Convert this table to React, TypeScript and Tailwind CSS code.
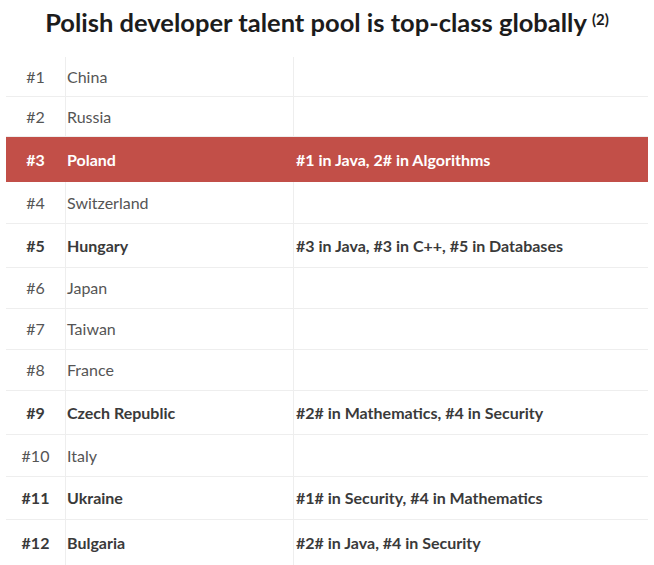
const rows = [
  { rank: "#1", country: "China", note: "", h: "h-[40px]" },
  { rank: "#2", country: "Russia", note: "", h: "h-[40px]" },
  { rank: "#3", country: "Poland", note: "#1 in Java, 2# in Algorithms", h: "h-[45px]", highlight: true },
  { rank: "#4", country: "Switzerland", note: "", h: "h-[42px]" },
  { rank: "#5", country: "Hungary", note: "#3 in Java, #3 in C++, #5 in Databases", h: "h-[44px]" },
  { rank: "#6", country: "Japan", note: "", h: "h-[41px]" },
  { rank: "#7", country: "Taiwan", note: "", h: "h-[41px]" },
  { rank: "#8", country: "France", note: "", h: "h-[41px]" },
  { rank: "#9", country: "Czech Republic", note: "#2# in Mathematics, #4 in Security", h: "h-[44px]" },
  { rank: "#10", country: "Italy", note: "", h: "h-[42px]" },
  { rank: "#11", country: "Ukraine", note: "#1# in Security, #4 in Mathematics", h: "h-[43px]" },
  { rank: "#12", country: "Bulgaria", note: "#2# in Java, #4 in Security", h: "h-[45px]" },
];

export default function App() {
  return (
    <main className="min-h-screen bg-white font-['Lato','Liberation_Sans',sans-serif]">
      <div className="flex h-[57px] items-start justify-center pt-[3px]">
        <h1 className="text-[25.5px] font-bold text-[#1c1c1c]">
          Polish developer talent pool is top-class globally
          <sup className="ml-[5px] text-[15px] font-bold">(2)</sup>
        </h1>
      </div>

      <div className="mx-[6px]">
        {rows.map((row, i) => {
          const bold = row.note !== "" || row.highlight;
          const text = row.highlight
            ? "text-white font-bold"
            : bold
              ? "text-[#3a3a3a] font-bold"
              : "text-[#555]";
          const line = row.highlight ? "border-transparent" : "border-[#eeeeee]";
          return (
            <div
              key={row.rank}
              className={`grid grid-cols-[59px_228px_1fr] text-[16px] ${row.h} ${
                row.highlight ? "bg-[#c24f48]" : ""
              } ${i < rows.length - 1 && !row.highlight ? "border-b border-[#eeeeee]" : ""}`}
            >
              <div className={`flex items-center justify-center ${text}`}>{row.rank}</div>
              <div className={`flex items-center border-l pl-[1px] ${line} ${text}`}>{row.country}</div>
              <div className={`flex items-center border-l pl-[2px] ${line} ${text}`}>{row.note}</div>
            </div>
          );
        })}
      </div>
    </main>
  );
}
